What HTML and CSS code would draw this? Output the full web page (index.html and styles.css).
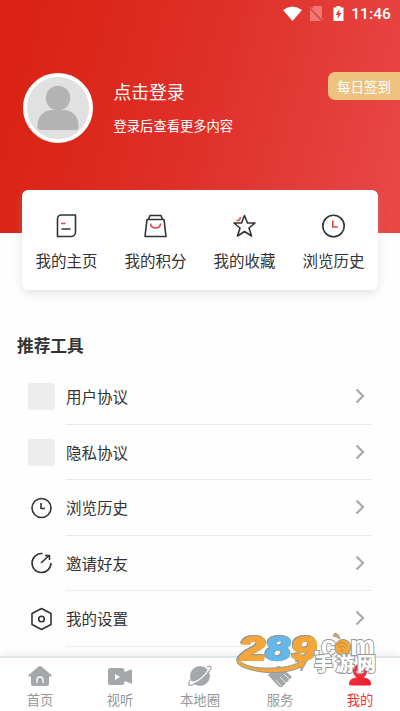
FILE: index.html
```html
<!DOCTYPE html>
<html lang="zh-CN">
<head>
<meta charset="utf-8">
<title>我的</title>
<link rel="stylesheet" href="styles.css">
</head>
<body>
<div class="app">
  <header class="hero">
    <div class="status">
      <svg width="92" height="16" viewBox="0 0 92 16">
        <path d="M0 4Q9.500-3 19 4L9.500 15Z" fill="#fff"/>
        <path d="M31 0h8v15H27V4Z" fill="#ef7774"/>
        <path d="m26 1 14 14" stroke="#d9403c" stroke-width="2"/><path d="m27 1 13 13" stroke="#ef7774"/>
        <path d="M50.500 1.500h3V0h4v1.500h3V15h-10Z" fill="#fff"/>
        <path d="m56.500 3-4 6h2.500l-.5 4 4-6H56Z" fill="#df413d"/>
      </svg>
      <span class="time">11:46</span>
    </div>
    <div class="profile">
      <div class="avatar">
        <svg width="62" height="62" viewBox="0 0 62 62"><circle cx="31" cy="24" r="12.200" fill="#b3b3b3"/><path d="M10.500 52C10.500 42 17 36 26 36h10c9 0 15.500 6 15.500 16 0 3-1 4-4 4h-33c-3 0-4-1-4-4Z" fill="#b3b3b3"/></svg>
      </div>
      <div class="login"><div class="name">点击登录</div><div class="hint">登录后查看更多内容</div></div>
      <div class="checkin">每日签到</div>
    </div>
  </header>
  <section class="card">
    <div class="quick"><svg class="line" viewBox="0 0 24 24"><path d="M7 1h14v17a4.500 4.500 0 0 1-4.500 4.500H3V5a4 4 0 0 1 4-4Z"/><path class="red" d="M6.500 9.500H11"/><path d="M7 15h9"/></svg><span>我的主页</span></div>
    <div class="quick"><svg class="line" viewBox="0 0 24 24"><path d="m5 5.500 1.500-4h11l1.500 4M3.500 5.500h17l2 17h-21Z"/><path class="red" d="M7 9.500c.5 6 9.500 6 10 0"/></svg><span>我的积分</span></div>
    <div class="quick"><svg class="line" viewBox="0 0 24 24"><path d="m12 1.500 3 7.500h7.500l-6 5 2.500 8-7-4.500-7 4.500 2.500-8-6-5H9Z"/><path class="red" d="M4 6.500h2q1.500-.5 2-3.500"/></svg><span>我的收藏</span></div>
    <div class="quick"><svg class="line" viewBox="0 0 24 24"><circle cx="12" cy="12" r="10.700"/><path class="red" d="M11.300 6.500V13h5"/></svg><span>浏览历史</span></div>
  </section>
  <main class="tools">
    <h2>推荐工具</h2>
    <div class="row"><div class="lead"><i class="blank"></i></div><div class="item"><span>用户协议</span><svg class="arrow" viewBox="0 0 10 16"><path d="m1.500 1.500 6.500 6.500-6.500 6.500"/></svg></div></div>
    <div class="row"><div class="lead"><i class="blank"></i></div><div class="item"><span>隐私协议</span><svg class="arrow" viewBox="0 0 10 16"><path d="m1.500 1.500 6.500 6.500-6.500 6.500"/></svg></div></div>
    <div class="row"><div class="lead"><svg class="tool" viewBox="0 0 22 24"><circle cx="11" cy="12" r="9.500"/><path d="M10.500 7v5.500h4"/></svg></div><div class="item"><span>浏览历史</span><svg class="arrow" viewBox="0 0 10 16"><path d="m1.500 1.500 6.500 6.500-6.500 6.500"/></svg></div></div>
    <div class="row"><div class="lead"><svg class="tool" viewBox="0 0 22 24"><path d="M12 2.600a9.500 9.500 0 1 0 8.500 9.400M10.500 12l8-7.500M14.500 4.500h4.500V9"/></svg></div><div class="item"><span>邀请好友</span><svg class="arrow" viewBox="0 0 10 16"><path d="m1.500 1.500 6.500 6.500-6.500 6.500"/></svg></div></div>
    <div class="row"><div class="lead"><svg class="tool" viewBox="0 0 22 24"><path d="m11 1.500 9.500 5v11l-9.500 5-9.500-5v-11Z"/><circle cx="11" cy="12" r="2.800"/></svg></div><div class="item"><span>我的设置</span><svg class="arrow" viewBox="0 0 10 16"><path d="m1.500 1.500 6.500 6.500-6.500 6.500"/></svg></div></div>
  </main>
  <nav class="tabs">
    <div class="tab"><svg viewBox="0 0 24 22"><path d="M12 1q1 0 2 1l9.500 8q1 1.500-1 1.500H21V19q0 2-2 2H5q-2 0-2-2v-7.500H1.500q-2 0-1-1.500L10 2q1-1 2-1Z" fill="#a5a8aa"/><path d="M9 18v-3a3 3 0 0 1 6 0v3" fill="none" stroke="#fff" stroke-width="1.300"/></svg><span>首页</span></div>
    <div class="tab"><svg viewBox="0 0 24 22"><path d="M2 3h12q2.500 0 2.500 3v1L23 4.500q1 0 1 1V18q0 1-1 .5L16.500 16v1q0 3-2.500 3H2q-2 0-2-2V5q0-2 2-2Z" fill="#a5a8aa"/><path d="m7 9 5 3-5 3Z" fill="#fff"/></svg><span>视听</span></div>
    <div class="tab"><svg viewBox="0 0 24 22"><circle cx="12" cy="11" r="10" fill="#a5a8aa"/><path d="M4 17.500C11 17 18 10 21 4" fill="none" stroke="#fff" stroke-width="1.400"/><path d="M2.500 14.500C-.5 19 .5 21.500 4 20 11 18 20 9 22.800 4 24 .8 22 .5 19 2" fill="none" stroke="#a5a8aa" stroke-width="1.200"/></svg><span>本地圈</span></div>
    <div class="tab"><svg viewBox="0 0 24 22"><path d="m0 10 8-8q3-2 5 0L24 12 14 22Q12 23 10 21Z" fill="#a5a8aa"/><path d="m8 15 5 6m-1-9 6 6m-2-9 6 6" stroke="#fff" stroke-width=".7"/></svg><span>服务</span></div>
    <div class="tab active"><svg viewBox="0 0 24 22"><defs><linearGradient id="person" x2="1" y2="1"><stop stop-color="#f0444b"/><stop offset="1" stop-color="#ee1627"/></linearGradient></defs><path d="M12-1C16-1 19 2 19 6c0 3-1.500 5-3.500 6.500 5 .5 7.500 3 7.500 6.500q0 1.500-3 1.500H4q-3 0-3-1.500c0-3.500 2.500-6 7.500-6.500C6.500 11 5 9 5 6c0-4 3-7 7-7Z" fill="url(#person)"/><path d="M8.500 6.500q3.500 4 7 0" fill="none" stroke="#fff" stroke-width="1.500"/></svg><span>我的</span></div>
  </nav>
  <svg class="watermark" width="164" height="54" viewBox="0 0 164 54">
    <path d="M2 26C1 34 18 39 34 38c12 0 23-2 29-6l-4-1 15-5-9 15v-4c-14 7-36 7-49 3C3 37-2 33 2 26Z" fill="#f4a63a" stroke="#969796"/>
    <g class="outlined">
      <g transform="translate(1.500 30) skewX(-8)"><text class="digits orange" x="1" y="0" textLength="26" lengthAdjust="spacingAndGlyphs">2</text><text class="digits blue" x="27" y="0" textLength="25" lengthAdjust="spacingAndGlyphs">8</text><text class="digits orange" x="53" y="0" textLength="25" lengthAdjust="spacingAndGlyphs">9</text></g>
    </g>
    <text class="com" x="77" y="25" textLength="23" lengthAdjust="spacingAndGlyphs">.c</text>
    <text class="com" x="114" y="25" textLength="25" lengthAdjust="spacingAndGlyphs">m</text>
    <path d="M99 17.500a8 8 0 1 1 16 0 8 8 0 0 1-16 0ZM104 9q-1-5-5-6l-2 3 4 1Z" fill="#f4a63a" stroke="#969796"/>
    <text class="site" x="78" y="40.500" textLength="62">手游网</text>
    <path d="M103 18q3-4 6 0m-8-3q6-5 10 1m-5 3v3" fill="none" stroke="#b88643"/>
  </svg>
</div>
</body>
</html>
```
FILE: styles.css
```css
* { box-sizing: border-box; }
body { margin: 0; background: #fff; color: #333; font-family: "Noto Sans CJK SC", sans-serif; }
.app { position: relative; width: 400px; height: 711px; overflow: hidden; display: flex; flex-direction: column; background: #fefefe; }
.hero { flex: none; height: 233px; background: linear-gradient(105deg, #da2314 8%, #df3029 50%, #e84948 100%); color: #fff; }
.status { height: 28px; display: flex; align-items: center; justify-content: flex-end; padding-right: 9px; }
.status svg { flex: none; width: 92px; margin-right: -24px; }
.time { font: 500 15.5px/28px Roboto, sans-serif; letter-spacing: .1px; }
.profile { display: flex; padding: 45px 0 0 23px; }
.avatar { width: 70px; height: 70px; border: 4px solid #fff; border-radius: 50%; background: #e1e1e1; overflow: hidden; }
.avatar svg { display: block; transform: translateY(-3px); }
.login { margin-left: 20.5px; padding-top: 5px; }
.name { font-size: 17.8px; line-height: 26px; }
.hint { margin-top: 12px; font-size: 13.3px; line-height: 20px; }
.checkin { margin: -1px 0 0 auto; width: 72px; height: 28px; padding-left: 9px; background: #edc27f; border-radius: 7px 0 0 7px; font-size: 13.5px; line-height: 28px; white-space: nowrap; }
.card { position: relative; flex: none; display: grid; grid-template-columns: repeat(4, 1fr); width: 356px; height: 100px; margin: -43px 22px 0; border-radius: 6px; background: #fff; box-shadow: 0 4px 8px rgba(170,170,170,.28); }
.quick { display: flex; flex-direction: column; align-items: center; padding-top: 24px; font-size: 15.5px; line-height: 24px; white-space: nowrap; }
.line { width: 24px; height: 24px; margin-bottom: 10px; }
.quick .line { transform: translateX(-.5px); }
.line, .tool, .arrow { fill: none; stroke: #333; stroke-width: 1.6; stroke-linejoin: round; }
.line .red { stroke: #e84149; }
.tools { padding: 42px 28px 0 17px; }
h2 { margin: 0 0 10px; font-size: 16.7px; line-height: 27px; font-weight: 700; }
.row { display: flex; height: 55.5px; }
.lead { width: 49px; display: flex; align-items: center; justify-content: center; }
.blank { width: 27px; height: 27px; border-radius: 3px; background: #ededed; }
.tool { width: 22px; height: 24px; }
.item { flex: 1; display: flex; align-items: center; justify-content: space-between; padding-right: 7px; border-bottom: 1px solid #e9e9e9; font-size: 15.5px; }
.row .lead svg { transform: translateX(-.5px); }
.arrow { width: 10px; height: 16px; stroke: #aaa; stroke-width: 2.2; stroke-linejoin: miter; }
.tabs { position: relative; margin-top: auto; flex: none; height: 55px; display: grid; grid-template-columns: repeat(5, 1fr); border-top: 2px solid #dfe4e6; background: #fff; box-shadow: 0 -2px 7px #eee; }
.tab { display: flex; flex-direction: column; align-items: center; padding-top: 7px; color: #969899; font-size: 13.3px; line-height: 20px; }
.tab svg { width: 24px; height: 22px; margin-bottom: 3px; overflow: visible; }
.active { color: #ed3541; }
.watermark { position: absolute; left: 236px; top: 630px; overflow: visible; }
.outlined { filter: drop-shadow(.6px .4px #969796) drop-shadow(-.6px -.4px #969796); }
.digits { font: bold 33px "Liberation Sans", sans-serif; stroke-width: 2; }
.orange { fill: #f4a63a; stroke: #f4a63a; }
.blue { fill: #65b8e8; stroke: #65b8e8; }
.com { font: bold 27px "Liberation Sans", sans-serif; fill: #fff; stroke: #969796; stroke-width: 1.8; paint-order: stroke; }
.site { font: 900 19px "Noto Sans CJK SC", sans-serif; fill: #fff; stroke: #969796; stroke-width: 1.8; paint-order: stroke; }
```
